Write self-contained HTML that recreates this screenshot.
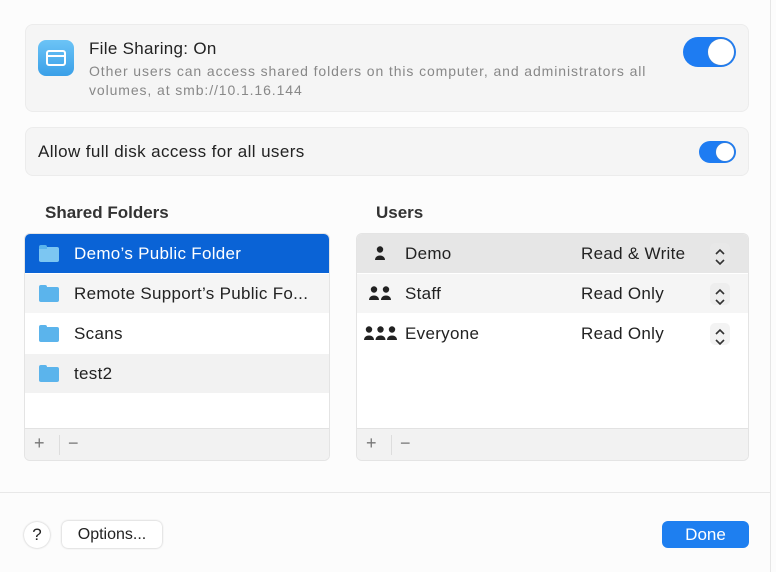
<!DOCTYPE html><html><head><style>
*{box-sizing:border-box;margin:0;padding:0}
body{width:776px;height:572px;background:#fcfcfc;font-family:"Liberation Sans",sans-serif;color:#222;position:relative;overflow:hidden}
.abs{position:absolute}
.card{position:absolute;background:#f5f5f5;border:1px solid #ececec;border-radius:8px}
.tog{position:absolute;background:#1e7cf2;border-radius:20px}
.tog i{position:absolute;right:2px;top:2px;background:#fff;border-radius:50%;box-shadow:0 0 1px #888}
.list{position:absolute;background:#fff;border:1px solid #e4e4e4;border-radius:6px;overflow:hidden}
.row{position:absolute;left:0;right:0;height:39px;font-size:17px;letter-spacing:.3px;line-height:39px}
.bar{position:absolute;left:0;right:0;bottom:0;height:32px;background:#f2f2f2;border-top:1px solid #e2e2e2;color:#777;font-size:18px}
.fold{position:absolute;width:20px;height:15px;background:#5bb4ec;border-radius:2px;top:13px;left:14px}
.fold:before{content:"";position:absolute;left:0;top:-2px;width:8px;height:4px;background:#5bb4ec;border-radius:2px 2px 0 0}
.step{position:absolute;right:18px;top:9px;width:20px;height:22px;background:#e8e8e8;border-radius:5px}
.ppl{position:absolute;top:12px}
</style></head><body>
<svg width="0" height="0" style="position:absolute"><defs>
<g id="p"><circle cx="5" cy="3.5" r="3.2" fill="#222"/><path d="M0 14 C0 8 10 8 10 14 Z" fill="#222"/></g>
<g id="st"><path d="M6 8 L10 4 L14 8 M6 14 L10 18 L14 14" fill="none" stroke="#333" stroke-width="1.6"/></g>
</defs></svg>
<div class="abs" style="left:770px;top:0;width:1px;height:572px;background:#e6e6e6"></div>
<div class="card" style="left:25px;top:24px;width:724px;height:88px"></div>
<div class="abs" style="left:38px;top:40px;width:36px;height:36px;border-radius:8px;background:linear-gradient(#6cc4f6,#3aa0e8)"></div>
<div class="abs" style="left:46px;top:50px;width:20px;height:16px;border:2.5px solid #fff;border-radius:3px"></div>
<div class="abs" style="left:46px;top:55px;width:20px;height:2px;background:#fff"></div>
<div class="abs" style="left:89px;top:39px;font-size:17px;letter-spacing:.3px">File Sharing: On</div>
<div class="abs" style="left:89px;top:62px;font-size:14px;letter-spacing:.9px;color:#888;line-height:19px;width:600px;white-space:nowrap">Other users can access shared folders on this computer, and administrators all<br>volumes, at smb://10.1.16.144</div>
<div class="tog" style="left:683px;top:37px;width:53px;height:30px"><i style="width:26px;height:26px"></i></div>
<div class="card" style="left:25px;top:127px;width:724px;height:49px"></div>
<div class="abs" style="left:38px;top:142px;font-size:17px;letter-spacing:.4px">Allow full disk access for all users</div>
<div class="tog" style="left:699px;top:141px;width:37px;height:22px"><i style="width:18px;height:18px"></i></div>
<div class="abs" style="left:45px;top:203px;font-size:17px;font-weight:bold;color:#333">Shared Folders</div>
<div class="abs" style="left:376px;top:203px;font-size:17px;font-weight:bold;color:#333">Users</div>
<div class="list" style="left:24px;top:233px;width:306px;height:228px">
<div class="row" style="top:0;background:#0a63d6;color:#fff"><div class="fold" style="background:#7cc6f2"></div><span style="position:absolute;left:49px">Demo’s Public Folder</span></div>
<div class="row" style="top:40px;background:#f5f5f5"><div class="fold"></div><span style="position:absolute;left:49px">Remote Support’s Public Fo...</span></div>
<div class="row" style="top:80px"><div class="fold"></div><span style="position:absolute;left:49px">Scans</span></div>
<div class="row" style="top:120px;background:#f2f2f2"><div class="fold"></div><span style="position:absolute;left:49px">test2</span></div>
<div class="bar"><span style="position:absolute;left:9px;top:4px">+</span><span style="position:absolute;left:34px;top:6px;width:1px;height:20px;background:#ddd"></span><span style="position:absolute;left:43px;top:4px">−</span></div>
</div>
<div class="list" style="left:356px;top:233px;width:393px;height:228px">
<div class="row" style="top:0;background:#e6e6e6"><svg class="ppl" style="left:18px" width="12" height="15"><use href="#p"/></svg><span style="position:absolute;left:48px">Demo</span><span style="position:absolute;left:224px">Read &amp; Write</span><div class="step"><svg width="20" height="22"><use href="#st"/></svg></div></div>
<div class="row" style="top:40px;background:#f5f5f5"><svg class="ppl" style="left:12px" width="24" height="15"><use href="#p"/><use href="#p" x="12"/></svg><span style="position:absolute;left:48px">Staff</span><span style="position:absolute;left:224px">Read Only</span><div class="step" style="background:#eee"><svg width="20" height="22"><use href="#st"/></svg></div></div>
<div class="row" style="top:80px"><svg class="ppl" style="left:7px" width="34" height="15"><use href="#p"/><use href="#p" x="11.5"/><use href="#p" x="23"/></svg><span style="position:absolute;left:48px">Everyone</span><span style="position:absolute;left:224px">Read Only</span><div class="step" style="background:#f3f3f3"><svg width="20" height="22"><use href="#st"/></svg></div></div>
<div class="bar"><span style="position:absolute;left:9px;top:4px">+</span><span style="position:absolute;left:34px;top:6px;width:1px;height:20px;background:#ddd"></span><span style="position:absolute;left:43px;top:4px">−</span></div>
</div>
<div class="abs" style="left:0;top:492px;width:770px;height:1px;background:#e8e8e8"></div>
<div class="abs" style="left:24px;top:522px;width:26px;height:26px;border-radius:50%;background:#fff;box-shadow:0 0 2px #bbb;text-align:center;line-height:26px;font-size:17px">?</div>
<div class="abs" style="left:62px;top:521px;width:100px;height:27px;border-radius:6px;background:#fff;box-shadow:0 0 2px #bbb;text-align:center;line-height:27px;font-size:16px">Options...</div>
<div class="abs" style="left:662px;top:521px;width:87px;height:27px;border-radius:6px;background:#1e7ff0;color:#fff;text-align:center;line-height:27px;font-size:17px">Done</div>
</body></html>
